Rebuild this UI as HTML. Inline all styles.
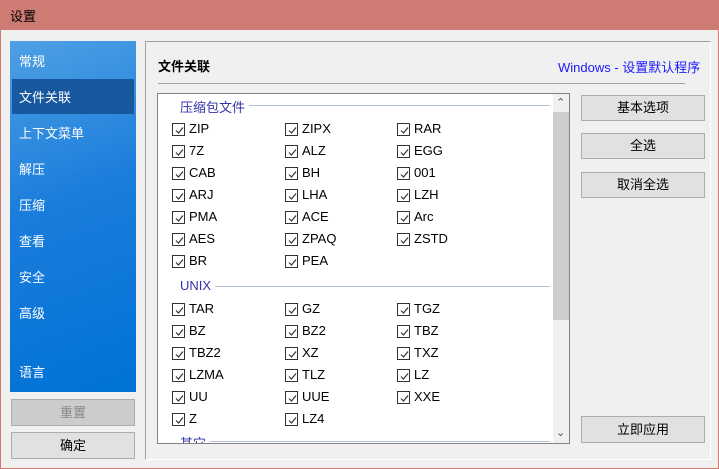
<!DOCTYPE html>
<html><head><meta charset="utf-8"><style>
*{margin:0;padding:0;box-sizing:border-box}
body{width:719px;height:469px;overflow:hidden;background:#cd7b73;font-family:"Liberation Sans","Noto Sans CJK SC",sans-serif;font-size:13px;color:#000;position:relative}
.abs{position:absolute}
#win{left:1px;top:30px;width:717px;height:438px;background:#f0f0f0}
.title{left:10px;top:6px;font-size:13px}
#side{left:10px;top:41px;width:126px;height:351px;background:linear-gradient(160deg,#4fa0e4 0%,#1a7ddb 45%,#0072d6 100%)}
.si{position:absolute;left:9px;color:#fff;font-size:13px}
.sel{left:2px;top:38px;width:122px;height:35px;background:#17589e}
.btn{position:absolute;border:1px solid #adadad;background:#e1e1e1;text-align:center;font-size:13px}
#panel{left:145px;top:41px;width:566px;height:419px;border:1px solid #a0a0a0;border-right-color:#fff;border-bottom-color:#fff}
#list{left:157px;top:93px;width:413px;height:351px;background:#fff;border:1px solid #828282;overflow:hidden}
.cb{position:absolute;width:13px;height:13px;border:1px solid #333;background:#fff}
.cb svg{position:absolute;left:1px;top:1px}
.lb{position:absolute;font-size:13px}
.gh{position:absolute;color:#3333aa;font-size:13px;background:#fff;padding-right:4px}
.gl{position:absolute;height:1px;background:#b4c0d8}
</style></head><body>
<div class="abs title">设置</div>
<div class="abs" id="win"></div>
<div class="abs" id="side">
<div class="abs sel"></div>
<div class="si" style="top:10px">常规</div>
<div class="si" style="top:46px">文件关联</div>
<div class="si" style="top:82px">上下文菜单</div>
<div class="si" style="top:118px">解压</div>
<div class="si" style="top:154px">压缩</div>
<div class="si" style="top:190px">查看</div>
<div class="si" style="top:226px">安全</div>
<div class="si" style="top:262px">高级</div>
<div class="si" style="top:321px">语言</div>
</div>
<div class="btn" style="left:11px;top:399px;width:124px;height:27px;background:#cccccc;color:#888;line-height:25px">重置</div>
<div class="btn" style="left:11px;top:432px;width:124px;height:27px;line-height:25px">确定</div>
<div class="abs" id="panel"></div>
<div class="abs" style="left:158px;top:56px;font-weight:bold">文件关联</div>
<div class="abs" style="left:558px;top:57px;color:#1a1aff">Windows - 设置默认程序</div>
<div class="abs" style="left:158px;top:83px;width:527px;height:1px;background:#a0a0a0"></div>
<div class="abs" id="list">
<div class="abs" style="left:395px;top:0;width:16px;height:349px;background:#f0f0f0"></div>
<div class="abs" style="left:395px;top:18px;width:16px;height:208px;background:#cdcdcd"></div>
<div class="abs" style="left:398px;top:2px;font-size:11px;color:#555">&#8963;</div>
<div class="abs" style="left:398px;top:332px;font-size:11px;color:#555">&#8964;</div>
<div id="items"></div>
</div>
<div class="btn" style="left:581px;top:95px;width:124px;height:26px;line-height:24px">基本选项</div>
<div class="btn" style="left:581px;top:133px;width:124px;height:26px;line-height:24px">全选</div>
<div class="btn" style="left:581px;top:172px;width:124px;height:26px;line-height:24px">取消全选</div>
<div class="btn" style="left:581px;top:416px;width:124px;height:27px;line-height:25px">立即应用</div>
<script>
var L=document.getElementById('items'),h='';
function grp(t,y){h+='<div class="gl" style="left:8px;top:'+(y+8)+'px;width:384px"></div><div class="gh" style="left:8px;top:'+y+'px;padding-left:14px">'+t+'</div>';}
var chk='<svg width="11" height="11"><path d="M2 5.5 L4.5 8 L9 2.5" stroke="#333" stroke-width="1.2" fill="none"/></svg>';
function row(y,a){var xs=[14,127,239];a.forEach(function(t,i){if(!t)return;h+='<div class="cb" style="left:'+xs[i]+'px;top:'+(y-6)+'px">'+chk+'</div><div class="lb" style="left:'+(xs[i]+17)+'px;top:'+(y-8)+'px">'+t+'</div>';});}
var o=93;
grp('压缩包文件',104-o-8);
var r1=[['ZIP','ZIPX','RAR'],['7Z','ALZ','EGG'],['CAB','BH','001'],['ARJ','LHA','LZH'],['PMA','ACE','Arc'],['AES','ZPAQ','ZSTD'],['BR','PEA','']];
r1.forEach(function(r,i){row(128+22*i-o,r)});
grp('UNIX',285-o-8);
var r2=[['TAR','GZ','TGZ'],['BZ','BZ2','TBZ'],['TBZ2','XZ','TXZ'],['LZMA','TLZ','LZ'],['UU','UUE','XXE'],['Z','LZ4','']];
r2.forEach(function(r,i){row(308+22*i-o,r)});
grp('其它',440-o-8);
L.innerHTML=h;
</script>
</body></html>
